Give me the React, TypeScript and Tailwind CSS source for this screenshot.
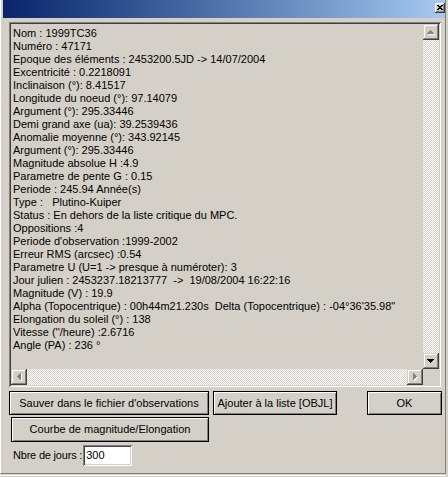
import React from "react";

const lines = [
  "Nom : 1999TC36",
  "Numéro : 47171",
  "Epoque des éléments : 2453200.5JD -> 14/07/2004",
  "Excentricité : 0.2218091",
  "Inclinaison (°): 8.41517",
  "Longitude du noeud (°): 97.14079",
  "Argument (°): 295.33446",
  "Demi grand axe (ua): 39.2539436",
  "Anomalie moyenne (°): 343.92145",
  "Argument (°): 295.33446",
  "Magnitude absolue H :4.9",
  "Parametre de pente G : 0.15",
  "Periode : 245.94 Année(s)",
  "Type :   Plutino-Kuiper",
  "Status : En dehors de la liste critique du MPC.",
  "Oppositions :4",
  "Periode d'observation :1999-2002",
  "Erreur RMS (arcsec) :0.54",
  "Parametre U (U=1 -> presque à numéroter): 3",
  "Jour julien : 2453237.18213777  ->  19/08/2004 16:22:16",
  "Magnitude (V) : 19.9",
  "Alpha (Topocentrique) : 00h44m21.230s  Delta (Topocentrique) : -04°36'35.98\"",
  "Elongation du soleil (°) : 138",
  "Vitesse (''/heure) :2.6716",
  "Angle (PA) : 236 °",
];

type Dir = "up" | "down" | "left" | "right";

function arrowRects(dir: Dir, dx: number, dy: number) {
  const r: { x: number; y: number; w: number; h: number }[] = [];
  for (let i = 0; i < 4; i++) {
    if (dir === "up") r.push({ x: 7 - i + dx, y: 6 + i + dy, w: 2 * i + 1, h: 1 });
    if (dir === "down") r.push({ x: 4 + i + dx, y: 6 + i + dy, w: 7 - 2 * i, h: 1 });
    if (dir === "left") r.push({ x: 6 + i + dx, y: 7 - i + dy, w: 1, h: 2 * i + 1 });
    if (dir === "right") r.push({ x: 6 + i + dx, y: 4 + i + dy, w: 1, h: 7 - 2 * i });
  }
  return r;
}

function ScrollBtn({ dir, disabled }: { dir: Dir; disabled?: boolean }) {
  return (
    <div className="relative w-[16px] h-[16px] shrink-0 bg-[#d4d0c8] shadow-[inset_-1px_-1px_#404040,inset_1px_1px_#d4d0c8,inset_-2px_-2px_#808080,inset_2px_2px_#ffffff]">
      <svg width="16" height="16" viewBox="0 0 16 16" className="absolute left-0 top-0" shapeRendering="crispEdges">
        {disabled &&
          arrowRects(dir, 1, 1).map((p, i) => (
            <rect key={"s" + i} x={p.x} y={p.y} width={p.w} height={p.h} fill="#ffffff" />
          ))}
        {arrowRects(dir, 0, 0).map((p, i) => (
          <rect key={i} x={p.x} y={p.y} width={p.w} height={p.h} fill={disabled ? "#808080" : "#000000"} />
        ))}
      </svg>
    </div>
  );
}

function Button({ label, className }: { label: string; className: string }) {
  return (
    <div
      className={
        "flex items-center justify-center bg-[#d4d0c8] text-black shadow-[inset_1px_1px_#000000,inset_-1px_-1px_#000000,inset_2px_2px_#ffffff,inset_-2px_-2px_#808080] " +
        className
      }
    >
      <span className="whitespace-pre">{label}</span>
    </div>
  );
}

export default function App() {
  const track =
    "bg-[repeating-conic-gradient(#ffffff_0%_25%,#d4d0c8_0%_50%)] bg-[length:2px_2px]";
  return (
    <div className="w-[448px] h-[477px] bg-[#d4d0c8] overflow-hidden font-['Liberation_Sans',Arial,sans-serif] text-[11px] leading-[13px] text-black">
      <div className="w-[446px] h-[474px] flex flex-col border-l border-l-white border-r border-r-[#808080] border-b border-b-[#808080]">
        {/* Title bar */}
        <div className="ml-[2px] w-[442px] h-[18px] shrink-0 flex items-start justify-end bg-linear-to-r from-[#0a246a] to-[#a6caf0]">
          <div className="relative mt-[3px] w-[10px] h-[10px] bg-[#d4d0c8] shadow-[inset_-1px_-1px_#404040,inset_1px_1px_#ffffff,inset_-2px_-2px_#808080]">
            <svg width="10" height="10" viewBox="0 0 10 10" className="absolute left-0 top-0" shapeRendering="crispEdges">
              {[0, 1, 2, 3, 4].map((i) => (
                <React.Fragment key={i}>
                  <rect x={2 + i} y={2 + i} width={2} height={1} fill="#000" />
                  <rect x={6 - i} y={2 + i} width={2} height={1} fill="#000" />
                </React.Fragment>
              ))}
            </svg>
          </div>
        </div>

        {/* List box */}
        <div className="ml-[8px] mt-[4px] w-[432px] h-[365px] shrink-0 p-[2px] bg-[#d4d0c8] shadow-[inset_1px_1px_#808080,inset_-1px_-1px_#ffffff,inset_2px_2px_#404040,inset_-2px_-2px_#d4d0c8]">
          <div className="w-full h-full grid grid-cols-[1fr_16px] grid-rows-[1fr_16px]">
            <div className="overflow-hidden pl-[2px] pt-[3px]">
              {lines.map((l, i) => (
                <div key={i} className="whitespace-pre h-[13px]">
                  {l}
                </div>
              ))}
            </div>
            <div className="flex flex-col">
              <ScrollBtn dir="up" disabled />
              <div className={"flex-1 " + track} />
              <ScrollBtn dir="down" />
            </div>
            <div className="flex">
              <ScrollBtn dir="left" disabled />
              <div className={"flex-1 " + track} />
              <ScrollBtn dir="right" disabled />
            </div>
            <div className="bg-[#d4d0c8]" />
          </div>
        </div>

        {/* Buttons row 1 */}
        <div className="ml-[8px] mt-[4px] h-[24px] shrink-0 flex">
          <Button label="Sauver dans le fichier d'observations" className="w-[200px] h-[24px]" />
          <Button label="Ajouter à la liste [OBJL]" className="ml-[4px] w-[124px] h-[24px]" />
          <Button label="OK" className="ml-[30px] w-[75px] h-[24px]" />
        </div>

        {/* Buttons row 2 */}
        <div className="ml-[10px] mt-[2px] h-[25px] shrink-0 flex">
          <Button label="Courbe de magnitude/Elongation" className="w-[198px] h-[25px]" />
        </div>

        {/* Nbre de jours */}
        <div className="ml-[12px] mt-[3px] h-[21px] shrink-0 flex items-center">
          <span className="whitespace-pre shrink-0 tracking-[-0.2px]">Nbre de jours :</span>
          <div className="ml-[1px] w-[49px] h-[21px] shrink-0 bg-white flex items-center pl-[3px] shadow-[inset_1px_1px_#808080,inset_-1px_-1px_#ffffff,inset_2px_2px_#404040,inset_-2px_-2px_#d4d0c8]">
            300
          </div>
        </div>
      </div>
      <div className="mt-[1px] h-[1px] w-[446px] bg-white" />
    </div>
  );
}
